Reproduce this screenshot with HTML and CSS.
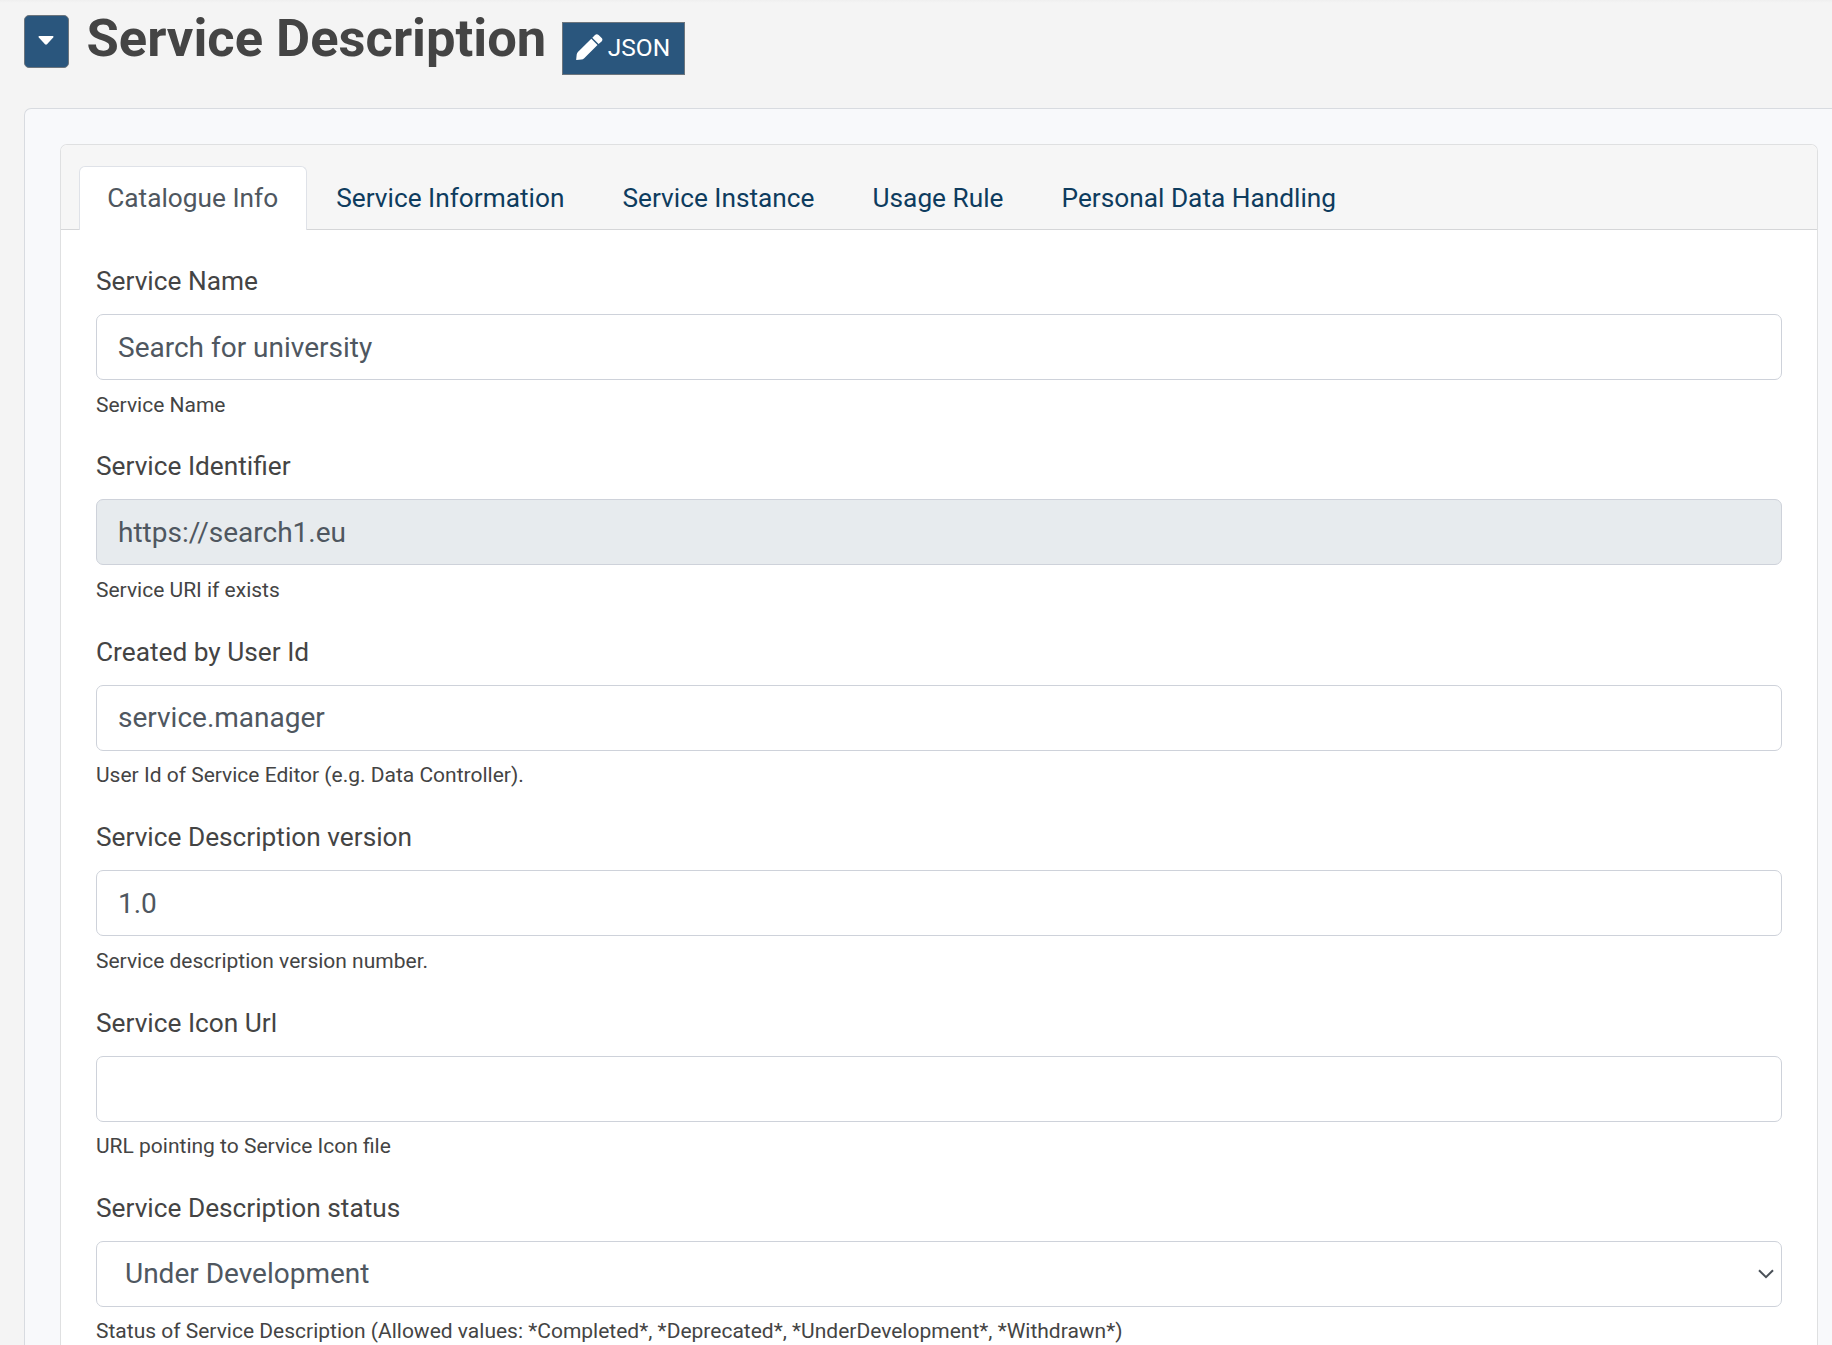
FILE: index.html
```html
<!DOCTYPE html>
<html lang="en">
<head>
<meta charset="utf-8">
<title>Service Description</title>
<link rel="stylesheet" href="styles.css">
</head>
<body>
<header class="page-header">
  <button class="toggle" type="button" aria-label="Collapse"><svg width="16" height="9" viewBox="0 0 16 9"><path d="M1.2 0h13.6q1.2.4.4 1.4L9 8.2q-1 .9-2 0L.8 1.4Q0 .4 1.2 0z" fill="#fff"/></svg></button>
  <h1 class="title">Service Description</h1>
  <button class="json" type="button"><svg class="pencil" width="27" height="26" viewBox="0 0 27 26"><path fill="#fff" d="M15.3 4.7l6.2 6.2L8.2 24.2Q7 25.4 5.4 25.5L.6 26Q.1 26 .2 25.2L.7 20.6Q.9 19.200 1.900 18.100zM16.300 3.700L19 1Q20.800-.6 22.600 1L25.700 4.100Q27.200 5.900 25.600 7.400L22.600 9.900z"/></svg><span class="json-text">JSON</span></button>
</header>
<main class="panel">
  <section class="card">
    <nav class="tabs">
      <a class="tab active">Catalogue Info</a>
      <a class="tab">Service Information</a>
      <a class="tab">Service Instance</a>
      <a class="tab">Usage Rule</a>
      <a class="tab">Personal Data Handling</a>
    </nav>
    <form class="form">
      <div class="field">
        <label class="label" for="f1">Service Name</label>
        <input class="control" id="f1" value="Search for university">
        <small class="help">Service Name</small>
      </div>
      <div class="field">
        <label class="label" for="f2">Service Identifier</label>
        <input class="control readonly" id="f2" value="https://search1.eu" readonly>
        <small class="help">Service URI if exists</small>
      </div>
      <div class="field">
        <label class="label" for="f3">Created by User Id</label>
        <input class="control" id="f3" value="service.manager">
        <small class="help">User Id of Service Editor (e.g. Data Controller).</small>
      </div>
      <div class="field">
        <label class="label" for="f4">Service Description version</label>
        <input class="control" id="f4" value="1.0">
        <small class="help">Service description version number.</small>
      </div>
      <div class="field">
        <label class="label" for="f5">Service Icon Url</label>
        <input class="control" id="f5" value="">
        <small class="help">URL pointing to Service Icon file</small>
      </div>
      <div class="field">
        <label class="label">Service Description status</label>
        <div class="control select"><span>Under Development</span><svg width="16" height="10" viewBox="0 0 16 10"><path d="M1 1.200l7 7 7-7" fill="none" stroke="#495057" stroke-width="2"/></svg></div>
        <small class="help">Status of Service Description (Allowed values: *Completed*, *Deprecated*, *UnderDevelopment*, *Withdrawn*)</small>
      </div>
    </form>
  </section>
</main>
</body>
</html>
```
FILE: styles.css
```css
* { box-sizing: border-box; }
body {
  margin: 0;
  height: 1345px;
  overflow: hidden;
  background: linear-gradient(#efefef, #f4f4f4 3px);
  color: #444;
  font: 26.25px/39px Roboto, sans-serif;
}
.page-header { display: flex; align-items: flex-start; height: 108px; padding: 15px 0 0 23.5px; }
.toggle, .json {
  display: flex;
  align-items: center;
  justify-content: center;
  height: 53px;
  padding: 0;
  border: 1px solid #6c757d;
  background: #2a567d;
  color: #fff;
}
.toggle { width: 45px; border-radius: 5px; }
.toggle svg { margin-top: -2px; }
.title { margin: -8px 0 0 18px; width: 460px; font-size: 52.5px; line-height: 62px; font-weight: 700; white-space: nowrap; }
.json { width: 123px; margin: 7px 0 0 15px; font: 24.5px Roboto, sans-serif; }
.pencil { margin: -3px 5px 0 0; }
.json-text { line-height: 39px; margin-top: -3px; }
.panel {
  width: 1808px;
  height: 1237px;
  margin-left: 24px;
  padding: 35px 0 0 35px;
  border: solid #d8dbe0;
  border-width: 1px 0 0 1px;
  border-radius: 7px 0 0 0;
  background: #f8f9fb;
}
.card {
  width: 1758px;
  height: 1201px;
  overflow: hidden;
  border: 1px solid #dfe0e1;
  border-bottom: 0;
  border-radius: 7px 7px 0 0;
  background: #fff;
}
.tabs {
  display: flex;
  height: 85px;
  padding: 21px 0 0 18px;
  border-bottom: 1px solid #d5d6d8;
  background: #f6f6f6;
}
.tab { height: 63px; padding: 12px 28px 0 28px; border: 1px solid transparent; color: #0e3c5e; white-space: nowrap; }
.tab.active { height: 64px; padding-left: 27.2px; border-color: #dfe2e8; border-bottom: 0; border-radius: 6px 6px 0 0; background: #fff; color: #4f5760; }
.form { padding: 32px 35px 0; }
.field { display: flex; flex-direction: column; height: 185.4px; }
.label { height: 52px; }
.control {
  width: 1686px;
  height: 66px;
  flex: none;
  padding: 0 21px;
  border: 1px solid #ced2da;
  border-radius: 7px;
  background: #fff;
  color: #4f5760;
  font: 28px/39px Roboto, sans-serif;
}
.readonly { background: #e7ebee; }
.select { display: flex; align-items: center; justify-content: space-between; padding: 0 7px 0 28px; }
.help { margin-top: 9.5px; font-size: 21px; line-height: 31px; white-space: nowrap; }
```
